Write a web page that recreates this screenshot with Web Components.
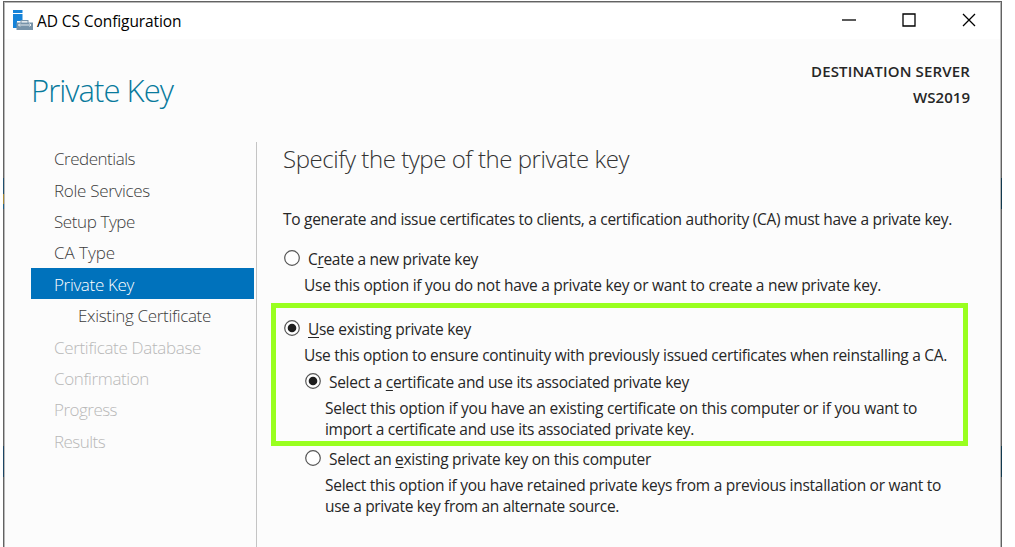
<!DOCTYPE html>
<html lang="en">
<head>
<meta charset="utf-8">
<title>AD CS Configuration</title>
<style>
  body {
    margin: 0;
    background: #ffffff;
    font-family: "Open Sans", "Noto Sans", sans-serif;
    font-size: 15.500px;
    color: #262626;
    overflow: hidden;
  }
</style>
</head>
<body>
<wizard-window>
  <title-bar slot="titlebar"><fit-text width="144.500">AD CS Configuration</fit-text></title-bar>
  <page-header slot="header">
    <fit-text width="142">Private Key</fit-text>
    <fit-text slot="server" width="159">DESTINATION SERVER</fit-text>
    <fit-text slot="server" width="57">WS2019</fit-text>
  </page-header>
  <nav-list slot="nav">
    <nav-item><fit-text width="81">Credentials</fit-text></nav-item>
    <nav-item><fit-text width="96">Role Services</fit-text></nav-item>
    <nav-item><fit-text width="81">Setup Type</fit-text></nav-item>
    <nav-item><fit-text width="61">CA Type</fit-text></nav-item>
    <nav-item selected><fit-text width="80">Private Key</fit-text></nav-item>
    <nav-item child><fit-text width="133">Existing Certificate</fit-text></nav-item>
    <nav-item disabled><fit-text width="147">Certificate Database</fit-text></nav-item>
    <nav-item disabled><fit-text width="95">Confirmation</fit-text></nav-item>
    <nav-item disabled><fit-text width="63">Progress</fit-text></nav-item>
    <nav-item disabled><fit-text width="51">Results</fit-text></nav-item>
  </nav-list>
  <key-page>
    <fit-text slot="heading" width="346">Specify the type of the private key</fit-text>
    <fit-text slot="intro" width="669">To generate and issue certificates to clients, a certification authority (CA) must have a private key.</fit-text>
    <radio-option>
      <fit-text slot="label" width="170">C<u>r</u>eate a new private key</fit-text>
      <fit-text width="577">Use this option if you do not have a private key or want to create a new private key.</fit-text>
    </radio-option>
    <highlight-box>
      <radio-option checked>
        <fit-text slot="label" width="163"><u>U</u>se existing private key</fit-text>
        <fit-text width="643">Use this option to ensure continuity with previously issued certificates when reinstalling a CA.</fit-text>
      </radio-option>
      <radio-option checked nested>
        <fit-text slot="label" width="360">Select a <u>c</u>ertificate and use its associated private key</fit-text>
        <fit-text width="592">Select this option if you have an existing certificate on this computer or if you want to</fit-text>
        <fit-text width="369">import a certificate and use its associated private key.</fit-text>
      </radio-option>
    </highlight-box>
    <radio-option nested>
      <fit-text slot="label" width="322">Select an <u>e</u>xisting private key on this computer</fit-text>
      <fit-text width="616">Select this option if you have retained private keys from a previous installation or want to</fit-text>
      <fit-text width="294">use a private key from an alternate source.</fit-text>
    </radio-option>
  </key-page>
</wizard-window>

<script>
// small helper, every element here is just a template in an open shadow root
class BaseElement extends HTMLElement {
  constructor () {
    super();
    this.attachShadow({ mode: 'open' });
    this.shadowRoot.innerHTML = this.constructor.template;
  }
}

class WizardWindow extends BaseElement {
  static template = `
    <style>
      :host {
        --edge: #626262;
        display: grid;
        grid-template-rows: 36px 103px 1fr;
        box-sizing: border-box;
        width: 999px;
        height: 546px;
        margin: 1px 0 0 3px;
        border: 1px solid transparent;
        border-bottom: 0;
        padding: 1px 1px 0;
        background:
          linear-gradient(#fcfcfc, #fcfcfc) content-box,
          linear-gradient(#b8b8b8, #b8b8b8) padding-box,
          linear-gradient(var(--edge) 177px, #1f4f6e 177px 193px, #a88a35 193px 203px, #1f5f88 203px 208px,
            var(--edge) 208px 445px, #1c4564 445px 476px, var(--edge) 476px) 0 0 / 1px 100% no-repeat border-box,
          linear-gradient(var(--edge) 177px, #123a4e 177px 208px,
            var(--edge) 208px 445px, #123a4e 445px 476px, var(--edge) 476px) 100% 0 / 1px 100% no-repeat border-box,
          linear-gradient(var(--edge), var(--edge)) border-box;
        background-origin: content-box, padding-box, border-box, border-box, border-box;
      }
      .body {
        display: grid;
        grid-template-columns: 252px 1fr;
      }
    </style>
    <slot name="titlebar"></slot>
    <slot name="header"></slot>
    <div class="body">
      <slot name="nav"></slot>
      <slot></slot>
    </div>
  `;
}

class TitleBar extends BaseElement {
  static template = `
    <style>
      :host {
        display: flex;
        align-items: center;
        background: #ffffff;
        color: #000000;
        padding: 0 24px 0 8px;
      }
      .icon {
        margin: 0 4px 2px 0;
      }
      .buttons {
        display: flex;
        gap: 46px;
        margin: 0 0 2px auto;
      }
      svg { display: block; }
    </style>
    <svg class="icon" width="20" height="20" viewBox="0 0 20 20">
      <path fill="#1683d8" d="M0 0h9.500v3H0zM0 4h9.500v7H4v7H0z"/>
      <path fill="#7793a9" d="M3.500 12.500h4V10h8v2.500h4.500V20H3.500z"/>
      <path fill="#fff" d="M8.500 11.200h6v1.300h-6z"/>
      <path stroke="#fff" fill="none" stroke-width=".8" d="M5.500 15h12.500M7 13.500l-1.500 1.500 1.500 1.500M16.500 13.500l1.500 1.500-1.500 1.500"/>
    </svg>
    <slot></slot>
    <div class="buttons">
      <svg width="14" height="14"><path stroke="#000" stroke-width="1.300" d="M0 7h14"/></svg>
      <svg width="14" height="14"><path stroke="#000" stroke-width="1.300" fill="none" d="M1 1h12v12H1z"/></svg>
      <svg width="14" height="14"><path stroke="#000" stroke-width="1.300" d="M1 1l12 12M13 1L1 13"/></svg>
    </div>
  `;
}

class PageHeader extends BaseElement {
  static template = `
    <style>
      :host {
        display: flex;
        justify-content: space-between;
        padding: 0 30px 0 26px;
      }
      .title {
        font-size: 31px;
        font-weight: 300;
        line-height: 40px;
        color: #087a9c;
        padding-top: 31px;
      }
      .server {
        display: flex;
        flex-direction: column;
        align-items: flex-end;
        padding-top: 19px;
        line-height: 26px;
        font-size: 15px;
        font-weight: 600;
      }
    </style>
    <div class="title"><slot></slot></div>
    <div class="server"><slot name="server"></slot></div>
  `;
}

class NavList extends BaseElement {
  static template = `
    <style>
      :host {
        display: block;
        padding: 0.500px 2px 0 26px;
        border-right: 1px solid #c4c4c4;
      }
    </style>
    <slot></slot>
  `;
}

class NavItem extends BaseElement {
  static template = `
    <style>
      :host {
        display: flex;
        align-items: center;
        box-sizing: border-box;
        height: 31.400px;
        padding: 1px 0 0 23px;
        font-size: 17px;
        font-weight: 300;
        color: #3c3c3c;
      }
      :host([child]) { padding-left: 47px; }
      :host([selected]) {
        background: #0072bc;
        color: #ffffff;
      }
      :host([disabled]) { color: #b8b8b8; }
    </style>
    <slot></slot>
  `;
}

class KeyPage extends BaseElement {
  static template = `
    <style>
      :host {
        display: flex;
        flex-direction: column;
        padding-left: 26px;
      }
      .heading {
        font-size: 24px;
        font-weight: 300;
        line-height: 34px;
        color: #333333;
      }
      .intro {
        line-height: 21px;
        margin: 33px 0 19px;
      }
    </style>
    <div class="heading"><slot name="heading"></slot></div>
    <div class="intro"><slot name="intro"></slot></div>
    <slot></slot>
  `;
}

class RadioOption extends BaseElement {
  static template = `
    <style>
      :host {
        display: block;
        line-height: 21px;
      }
      :host([nested]) { padding-left: 21px; }
      .row {
        display: flex;
        align-items: center;
        gap: 8px;
        padding-left: 1px;
      }
      svg { margin-bottom: 3px; }
      .dot { display: none; }
      :host([checked]) .dot { display: block; }
      .text {
        padding: 5px 0 0 21px;
      }
    </style>
    <div class="row">
      <svg width="16" height="16">
        <circle cx="8" cy="8" r="7.300" fill="#fff" stroke="#555" stroke-width="1.200"/>
        <circle class="dot" cx="8" cy="8" r="4.300" fill="#1e1e1e"/>
      </svg>
      <slot name="label"></slot>
    </div>
    <div class="text"><slot></slot></div>
  `;
}

class HighlightBox extends BaseElement {
  static template = `
    <style>
      :host {
        display: flex;
        flex-direction: column;
        gap: 6px;
        box-sizing: border-box;
        width: 697px;
        height: 143px;
        margin: 7px 0 3px -12px;
        padding: 11px 0 0 7px;
        border: 5px solid #99ff1f;
      }
    </style>
    <slot></slot>
  `;
}

// One line of text, tracked so that it takes up the given width
class FitText extends BaseElement {
  static template = `
    <style>
      :host {
        display: block;
        width: max-content;
        white-space: nowrap;
      }
      ::slotted(u) {
        text-underline-offset: 2px;
        text-decoration-thickness: 1px;
      }
    </style>
    <slot></slot>
  `;

  fit () {
    const target = Number(this.getAttribute('width'));
    const natural = this.getBoundingClientRect().width;
    const spacing = (target - natural) / this.textContent.length;
    this.style.letterSpacing = `${ spacing }px`;
  }
}

customElements.define('wizard-window', WizardWindow);
customElements.define('title-bar', TitleBar);
customElements.define('page-header', PageHeader);
customElements.define('nav-list', NavList);
customElements.define('nav-item', NavItem);
customElements.define('key-page', KeyPage);
customElements.define('radio-option', RadioOption);
customElements.define('highlight-box', HighlightBox);
customElements.define('fit-text', FitText);

document.querySelectorAll('fit-text').forEach((el) => el.fit());
</script>
</body>
</html>
